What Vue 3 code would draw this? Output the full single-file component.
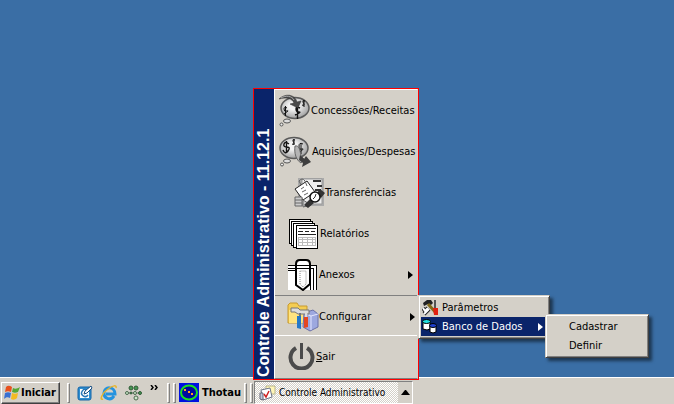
<template>
  <div class="desktop">
    <footer class="taskbar">
      <button class="start" type="button">
        <svg width="18" height="17" viewBox="0 0 18 17" aria-hidden="true">
          <path d="M3 3c2-2 4-1 6 0L8 8C6 7 4 7 2 8z" fill="#e8501c" />
          <path d="M10 4c2 1 4 1 7-1l-2 5c-2 1-4 1-6 0z" fill="#55a832" />
          <path d="M2 9c2-1 4-1 6 0l-1 5c-2-1-4-1-6 1z" fill="#3970d2" />
          <path d="M9 9c2 1 4 1 6 0l-1 5c-2 2-4 2-6 1z" fill="#f4bb21" />
        </svg>
        <span>Iniciar</span>
      </button>

      <span class="grip"></span>
      <nav class="quick" aria-label="Inicialização rápida">
        <a href="#" aria-label="Área de trabalho">
          <svg width="16" height="16" viewBox="0 0 16 16">
            <rect x="1" y="2" width="13" height="13" rx="2" fill="#2f8fd0" stroke="#1565a8" />
            <path d="M3 4h9v9H3z" fill="#fff" />
            <path d="M10 5a3.500 3.500 0 1 0 1 5" fill="none" stroke="#2878b8" stroke-width="1.5" />
            <path d="M7 9l1-3 6-5 1 2-5 5z" fill="#fff" stroke="#174e82" />
          </svg>
        </a>
        <a href="#" aria-label="Internet">
          <svg width="18" height="16" viewBox="0 0 18 16">
            <path d="M14 11c-3 5-10 3-10-3 0-7 11-7 11 1H6" fill="none" stroke="#2493df" stroke-width="3" />
            <path d="M3 14C-1 16 2 8 8 4c5-4 9-4 8-1" fill="none" stroke="#e7b42c" stroke-width="1.5" />
          </svg>
        </a>
        <a href="#" aria-label="Rede">
          <svg width="18" height="16" viewBox="0 0 18 16">
            <path d="M2 8h13" stroke="#777" />
            <g fill="#469653" stroke="#315b38">
              <circle cx="6" cy="3" r="2" /><circle cx="11" cy="3" r="2" />
              <circle cx="6" cy="8" r="1" />
              <circle cx="15" cy="8" r="1.500" />
            </g>
            <g fill="#cfe8cc" stroke="#4b6b4e">
              <circle cx="2" cy="8" r="1.500" /><circle cx="10" cy="8" r="1.500" />
              <circle cx="11" cy="13" r="2" />
            </g>
          </svg>
        </a>
        <button class="more" type="button" aria-label="Mais">
          <svg width="9" height="5" viewBox="0 0 9 5">
            <path d="M1 0l2 2.500L1 5M5 0l2 2.500L5 5" fill="none" stroke="#000" stroke-width="1.5" />
          </svg>
        </button>
      </nav>
      <span class="grip"></span>
      <span class="grip grip--next"></span>

      <button class="thotau" type="button">
        <svg width="20" height="19" viewBox="0 0 20 19" aria-hidden="true">
          <rect width="20" height="19" fill="#0010e0" />
          <ellipse cx="10" cy="9.500" rx="8" ry="7" fill="#0008a0" stroke="#18e020" stroke-width="2" />
          <path d="M5 6h2v2H5zM9 8h2v2H9zM12 10h2v2h-2z" fill="#ffa020" />
        </svg>
        <span>Thotau</span>
      </button>
      <span class="grip grip--next"></span>
      <span class="grip grip--next"></span>

      <div class="launcher">
        <button class="task" type="button">
          <svg width="17" height="16" viewBox="0 0 17 16" aria-hidden="true">
            <path d="M7 1h9v8H7z" fill="#fff6b8" stroke="#b8b48c" />
            <path d="M2 5l9-2 2 9-9 3z" fill="#fff" stroke="#6b7488" />
            <path d="M1 8v6l3 1V8z" fill="#bfc9dc" stroke="#667" />
            <path d="M5 9l2 3 3-6" fill="none" stroke="#d02020" stroke-width="1.5" />
          </svg>
          <span>Controle Administrativo</span>
        </button>
        <button class="task-arrow" type="button" aria-label="Abrir menu">
          <svg width="9" height="5" viewBox="0 0 9 5"><path d="M4 0h1l4 5H0z" /></svg>
        </button>

        <div class="menu">
          <div class="banner"><span>Controle Administrativo - 11.12.1</span></div>
          <ul class="items">
            <li v-for="item in items" :key="item.id" :class="['item', `item--${item.id}`, { 'item--open': item.id === 'configurar' }]">
              <button class="entry" type="button">
                <svg v-if="item.id === 'concessoes'" width="33" height="33" viewBox="0 0 33 33">
                  <defs>
                    <radialGradient id="bubble" cx="0.45" cy="0.4" r="0.6">
                      <stop offset="0.3" stop-color="#f2f2f2" />
                      <stop offset="1" stop-color="#a0a0a0" />
                    </radialGradient>
                  </defs>
                  <ellipse cx="17" cy="14" rx="14" ry="10.500" fill="url(#bubble)" stroke="#5a5a5a" stroke-width="1.5" />
                  <ellipse cx="9" cy="27" rx="3.500" ry="2" fill="#ddd" stroke="#555" />
                  <circle cx="3.500" cy="30.500" r="1.500" fill="#eee" stroke="#555" />
                  <g fill="none" stroke="#111">
                    <path d="M9 14q-3-2-3 1t3 2-3 3M7.500 12v10" />
                    <path d="M22 14q-4-2-4 1t3 3-4 3M19.500 12v13" stroke-width="1.4" />
                    <path d="M27 7q-3-1-2 1t1 3-2 0M26 6v7" />
                  </g>
                  <path d="M1 5C7-1 17 0 19 8l4-1-3 7-8-4 4-1C14 4 8 3 1 5z" fill="#4a4a4a" stroke="#2a2a2a" stroke-width="0.5" />
                  <path d="M3 4c5-3 11-2 13 2" fill="none" stroke="#aaa" />
                </svg>
                <svg v-else-if="item.id === 'aquisicoes'" width="33" height="33" viewBox="0 0 33 33">
                  <ellipse cx="15" cy="13" rx="14" ry="10.500" fill="url(#bubble)" stroke="#5a5a5a" stroke-width="1.5" />
                  <ellipse cx="8" cy="26" rx="3.500" ry="2" fill="#ddd" stroke="#555" />
                  <circle cx="3" cy="29.500" r="1.500" fill="#eee" stroke="#555" />
                  <g fill="none" stroke="#111">
                    <path d="M10 9q-4-3-5 0t3 3 1 4-5-1M7.500 6v12" stroke-width="1.4" />
                    <path d="M16 5q-3-1-2 1t1 3-2 0M15 4v6" />
                    <path d="M24 9q-4-2-4 2t3 3-3 4M22 8v11" />
                  </g>
                  <path d="M16 11c4-1 5 4 6 10l3 3-3 4c-5-3-7-10-6-17z" fill="#b4b4b4" stroke="#666" />
                  <path d="M21 20l4 4 2-3 5 6-9 5 1-4-4-3z" fill="#3e3e3e" />
                </svg>
                <svg v-else-if="item.id === 'transferencias'" width="32" height="32" viewBox="0 0 32 32">
                  <path d="M5 1h26v28H5z" fill="#aaa" />
                  <path d="M9 2h20v25H9z" fill="#eee" stroke="#999" />
                  <path d="M20 4h8M24 9h5M22 13h6" stroke="#333" stroke-width="2" />
                  <path d="M2 12L14 4l8 11-12 8z" fill="#fff" stroke="#222" />
                  <path d="M8 12l3-2M9 15l4-2M11 18l4-2M8 8L6 4q3-4 6 0l2 5" fill="none" stroke="#666" />
                  <path d="M2 20h7v9H2zM2 23h7M2 26h7M10 23l8 5-8 2z" fill="#ccc" stroke="#666" />
                  <path d="M27 12l5 4-4 5-5-4zM17 22l4 4-6 5-4-3z" fill="#333" />
                  <circle cx="22" cy="20" r="5" fill="#fff" stroke="#111" stroke-width="1.5" />
                  <path d="M23 17l-1 3-2 2" fill="none" stroke="#333" />
                </svg>
                <svg v-else-if="item.id === 'relatorios'" width="31" height="32" viewBox="0 0 31 32" shape-rendering="crispEdges">
                  <g fill="#fff" stroke="#000">
                    <path d="M1.500 1.500h21v24h-21z" />
                    <path d="M3.500 3.500h21v24h-21z" />
                    <path d="M5.500 5.500h21v24h-21z" />
                    <path d="M8.500 7.500h21v23h-21z" />
                  </g>
                  <path d="M11 10.500h17M10 13.500h5M17 13.500h4M23 13.500h4M10 16.500h18" stroke="#222" />
                  <path d="M10.500 19.500h17v8h-17zM10 21.500h18M10 24.500h18M14.500 19v9M19.500 19v9M24.500 19v9" fill="none" stroke="#bbb" />
                </svg>
                <svg v-else-if="item.id === 'anexos'" width="30" height="32" viewBox="0 0 30 32">
                  <path d="M0 6h29v25H0z" fill="#fff" />
                  <path d="M0 6.500h28.500V31M0 9.500h25.500V31M0 11.500h22.500V31" fill="none" stroke="#000" shape-rendering="crispEdges" />
                  <path d="M11 2h8l2 3v20l-6 5-6-5V5z" fill="#fff" />
                  <path d="M8 14V5q0-4 4-4h6q4 0 4 4v20l-7 6-7-5V14" fill="none" stroke="#000" stroke-width="2" />
                  <path d="M9 6.500h12M9 9.500h12" stroke="#000" shape-rendering="crispEdges" />
                  <path d="M12 12v13l3 3 3-3V12z" fill="none" stroke="#888" stroke-dasharray="1 1" />
                </svg>
                <svg v-else-if="item.id === 'configurar'" width="32" height="31" viewBox="0 0 32 31">
                  <path d="M1 4l2-2h7l2 3h8v17H1z" fill="#f4cd53" stroke="#c79a30" />
                  <path d="M2 9h18v13H2z" fill="#ffe47f" />
                  <path d="M17 12l9-3 5 4v13l-8 4-7-4z" fill="#9da8df" stroke="#6d72a7" />
                  <path d="M17 12l7 3v14M24 15l7-2" fill="none" stroke="#e4e6ff" />
                  <path d="M4 7h7l2 2h9v4H11l-3-2H4z" fill="#ddd" stroke="#777" />
                  <path d="M12 12h2v5h-2z" fill="#777" />
                  <path d="M10 15h4v13l-4-1z" fill="#2478c8" />
                  <path d="M18 12h2v5h-2z" fill="#ddd" />
                  <path d="M17 16h4v10l-4 1z" fill="#e44722" />
                </svg>
                <svg v-else width="27" height="27" viewBox="0 0 27 27">
                  <path d="M8 5a11 11 0 1 0 11 0" fill="none" stroke="#4b4b4b" stroke-width="4" />
                  <path d="M13.500 0v16" stroke="#4b4b4b" stroke-width="3" />
                </svg>
                <span v-if="item.id === 'sair'"><u>S</u>air</span>
                <span v-else>{{ item.label }}</span>
                <svg v-if="item.more" class="more-arrow" width="5" height="8" viewBox="0 0 5 8"><path d="M0 0l5 4-5 4z" /></svg>
              </button>

              <ul v-if="item.id === 'configurar'" class="popup popup--first">
                <li>
                  <button class="sub" type="button">
                    <svg width="17" height="17" viewBox="0 0 17 17">
                      <path d="M1 4l4-3h4l2 3-2 2-3-1-4 2z" fill="#222" />
                      <path d="M6 5l9 10" stroke="#806818" stroke-width="3" />
                      <path d="M13 1v8" stroke="#555" stroke-width="2" />
                      <path d="M1 9l2 3 3-3M2 15l5-5" fill="none" stroke="#222" stroke-width="4" />
                      <path d="M1 9l2 3 3-3M2 15l5-5" fill="none" stroke="#fff" stroke-width="2" />
                      <path d="M11 9h5v7h-4z" fill="#e02010" />
                    </svg>
                    <span>Parâmetros</span>
                  </button>
                </li>
                <li class="nested">
                  <button class="sub sub--active" type="button">
                    <svg width="17" height="17" viewBox="0 0 17 17">
                      <path d="M1 4h7v7l-3 1-4-1z" fill="#fff" stroke="#000" />
                      <ellipse cx="4.500" cy="3.500" rx="4" ry="2" fill="#20e0e0" stroke="#000" />
                      <path d="M8 8h6v6l-3 1-3-1z" fill="#fff" stroke="#000" />
                      <ellipse cx="11" cy="7.500" rx="3.500" ry="2" fill="#2040d0" stroke="#000" />
                    </svg>
                    <span>Banco de Dados</span>
                    <svg class="more-arrow" width="5" height="8" viewBox="0 0 5 8"><path d="M0 0l5 4-5 4z" /></svg>
                  </button>
                  <ul class="popup popup--second">
                    <li><button class="sub" type="button">Cadastrar</button></li>
                    <li><button class="sub" type="button">Definir</button></li>
                  </ul>
                </li>
              </ul>
            </li>
          </ul>
        </div>
      </div>
    </footer>
  </div>
</template>

<script setup>
const items = [
  { id: 'concessoes', label: 'Concessões/Receitas' },
  { id: 'aquisicoes', label: 'Aquisições/Despesas' },
  { id: 'transferencias', label: 'Transferências' },
  { id: 'relatorios', label: 'Relatórios' },
  { id: 'anexos', label: 'Anexos', more: true },
  { id: 'configurar', label: 'Configurar', more: true },
  { id: 'sair', label: 'Sair' }
];
</script>

<style>
body {
  margin: 0;
}
</style>

<style scoped>
.desktop {
  display: flex;
  flex-direction: column;
  justify-content: flex-end;
  min-height: 100vh;
  background: #3a6ea5;
  color: #000;
  font-family: Tahoma, "DejaVu Sans Condensed", "DejaVu Sans", sans-serif;
  font-size: 11px;
  line-height: 14px;
}

* {
  box-sizing: border-box;
}

ul {
  list-style: none;
  margin: 0;
  padding: 0;
}

button {
  display: flex;
  align-items: center;
  padding: 0;
  border: none;
  background: none;
  color: inherit;
  font: inherit;
  white-space: nowrap;
}

svg {
  display: block;
  flex: none;
}

.taskbar {
  display: flex;
  align-items: center;
  height: 27px;
  padding: 3px 1px 0;
  border-top: 1px solid #fff;
  background: #d4d0c8;
}

.start {
  width: 59px;
  height: 22px;
  padding-left: 1px;
  border: 1px solid;
  border-color: #fff #404040 #404040 #fff;
  box-shadow: inset -1px -1px #808080;
  font-weight: bold;
}

.grip {
  flex: none;
  width: 3px;
  height: 20px;
  margin-left: 7px;
  border: 1px solid;
  border-color: #fff #808080 #808080 #fff;
}

.grip--next {
  margin-left: 3px;
}

.quick {
  display: flex;
  align-items: center;
  gap: 7px;
  width: 90px;
  padding-left: 7px;
}

.more {
  align-self: flex-start;
}

.thotau {
  gap: 3px;
  width: 62px;
  margin-left: 3px;
  font-weight: bold;
}

.launcher {
  position: relative;
  display: flex;
  height: 23px;
  margin-left: 1px;
  border: 1px solid;
  border-color: #808080 #fff #fff #808080;
}

.task {
  gap: 3px;
  width: 143px;
  padding-left: 4px;
  background: repeating-conic-gradient(#fff 0 25%, #d4d0c8 0 50%) 0 0 / 2px 2px;
  font-size: 10px;
}

.task-arrow {
  justify-content: center;
  width: 14px;
}

.menu {
  position: absolute;
  left: -2px;
  bottom: 23px;
  display: flex;
  width: 166px;
  border: 1px solid #f00;
  background: #d4d0c8;
}

.banner {
  display: flex;
  flex: none;
  width: 20px;
  background: #0a246a;
  color: #fff;
  font: bold 16px/20px "Liberation Sans", Arial, sans-serif;
}

.banner span {
  padding-top: 2px;
  writing-mode: vertical-rl;
  transform: rotate(180deg);
  white-space: nowrap;
}

.items {
  flex: 1;
  min-width: 0;
  padding-bottom: 1px;
  border: 1px solid;
  border-color: #fff #d4d0c8 #808080 #fff;
}

.item {
  position: relative;
  height: 41px;
}

.entry {
  width: 100%;
  height: 41px;
  padding-left: 3px;
}

.item--aquisicoes .entry {
  padding-left: 4px;
}

.item--transferencias .entry {
  padding-left: 18px;
}

.item--relatorios .entry,
.item--anexos .entry,
.item--sair .entry {
  gap: 1px;
  padding-left: 13px;
}

.item--configurar .entry {
  padding-left: 12px;
}

.item--open {
  border-top: 1px solid #808080;
  border-bottom: 1px solid #fff;
}

.more-arrow {
  margin-left: auto;
  margin-right: 4px;
  fill: currentColor;
}

.item--open .entry .more-arrow {
  margin-right: 2px;
}

.popup {
  position: absolute;
  padding: 2px;
  border: 1px solid;
  border-color: #d4d0c8 #404040 #404040 #d4d0c8;
  background: #d4d0c8;
  box-shadow: inset 1px 1px #fff, inset -1px -1px #808080, 3px 3px 3px rgba(0, 0, 0, 0.5);
}

.popup--first {
  left: 143px;
  top: -1px;
  width: 132px;
}

.popup--second {
  left: 124px;
  top: -3px;
  width: 104px;
}

.nested {
  position: relative;
}

.sub {
  gap: 3px;
  width: 100%;
  height: 19px;
  padding-left: 1px;
}

.sub--active {
  background: #0a246a;
  color: #fff;
}

.popup--second .sub {
  padding-left: 21px;
}
</style>
